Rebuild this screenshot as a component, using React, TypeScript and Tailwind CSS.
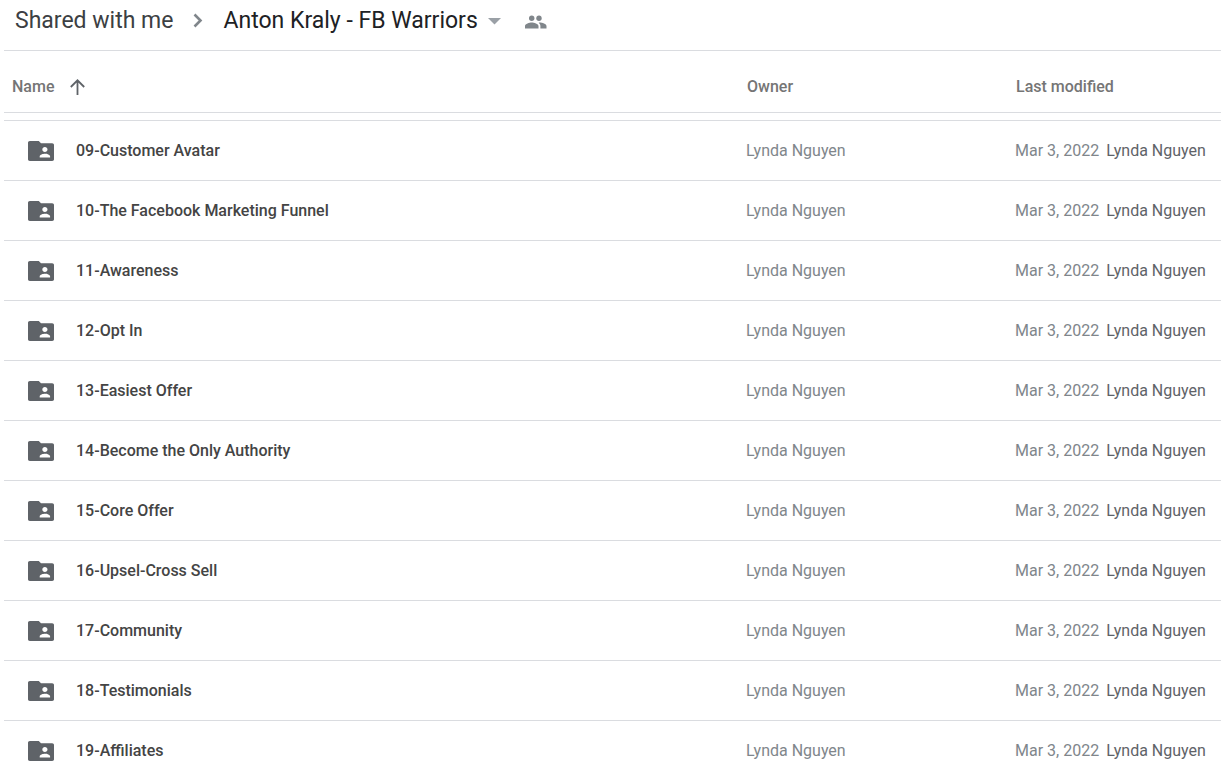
interface Folder {
  name: string;
  owner: string;
  modified: string;
  modifiedBy: string;
}

const FOLDER_NAMES = [
  '09-Customer Avatar',
  '10-The Facebook Marketing Funnel',
  '11-Awareness',
  '12-Opt In',
  '13-Easiest Offer',
  '14-Become the Only Authority',
  '15-Core Offer',
  '16-Upsel-Cross Sell',
  '17-Community',
  '18-Testimonials',
  '19-Affiliates',
];

const FOLDERS: Folder[] = FOLDER_NAMES.map((name) => ({
  name,
  owner: 'Lynda Nguyen',
  modified: 'Mar 3, 2022',
  modifiedBy: 'Lynda Nguyen',
}));

function SharedFolderIcon() {
  return (
    <svg width="26" height="20" viewBox="2 4 20 16" preserveAspectRatio="none" className="flex-shrink-0 fill-[#5f6368]" aria-hidden="true">
      <path d="M20.6 5.7H12L10.3 4H3.4C2.6 4 2 4.6 2 5.4v13.2c0 .8.6 1.4 1.4 1.4h17.2c.8 0 1.4-.6 1.4-1.4V7.1c0-.8-.6-1.4-1.4-1.4zM15 8.8c1.1 0 2 .9 2 2s-.9 2-2 2-2-.9-2-2 .9-2 2-2zm4 8.3h-8v-1c0-1.33 2.67-2 4-2s4 .67 4 2v1z" />
    </svg>
  );
}

function Breadcrumbs() {
  return (
    <nav className="flex h-[51px] items-center border-b border-[#dadce0] pb-2 pl-[11px] font-['Roboto',sans-serif] text-[23px] leading-8" aria-label="Breadcrumb">
      <a href="#shared" className="text-[#3c4043]">Shared with me</a>
      <svg width="10" height="16" viewBox="0 0 10 16" className="mx-5 fill-none stroke-[#80868b]" strokeWidth="2.6" aria-hidden="true">
        <path d="M1.5 1.500 7.500 7.500l-6 6" />
      </svg>
      <button type="button" className="flex items-center gap-[10px] text-[#202124]">
        Anton Kraly - FB Warriors
        <svg width="13" height="7" viewBox="0 0 13 7" className="fill-[#9aa0a6]" aria-hidden="true">
          <path d="M0 0h13L6.500 6.500z" />
        </svg>
      </button>
      <button type="button" className="ml-6 pt-0.5" aria-label="Manage people">
        <svg width="22" height="14" viewBox="0 0 22 14" className="fill-[#80868b]" aria-hidden="true">
          <circle cx="6.7" cy="3.2" r="2.7" />
          <circle cx="14" cy="3.2" r="2.7" />
          <path d="M6.7 7.500C4.500 7.500 0 8.700 0 11.100v2.500h13.500v-2.500c0-2.400-4.500-3.600-6.800-3.600zM14.600 7.600c-.3 0-.6 0-.9.100 1 .8 1.700 1.900 1.700 3.300v2.600h6.100v-2.500c0-2.300-4.300-3.500-6.900-3.500z" />
        </svg>
      </button>
    </nav>
  );
}

export default function App() {
  return (
    <main className="h-screen overflow-hidden bg-white pl-1 font-['Roboto',sans-serif] text-base">
      <Breadcrumbs />
      <table className="w-full table-fixed border-separate border-spacing-0 text-left">
        <colgroup>
          <col />
          <col className="w-[269px]" />
          <col className="w-[206px]" />
        </colgroup>
        <thead className="text-[#757575]">
          <tr className="h-[62px]">
            <th className="border-b border-[#dadce0] pt-[10px] pl-2 font-medium">
              <button type="button" className="flex items-center gap-4">
                Name
                <svg width="15" height="16" viewBox="0 0 15 16" className="fill-none stroke-[#5f6368]" strokeWidth="1.8" aria-hidden="true">
                  <path d="M7.500 16V1.500M.8 8l6.700-6.700L14.200 8" />
                </svg>
              </button>
            </th>
            <th className="border-b border-[#dadce0] pt-[10px] pl-px font-medium">Owner</th>
            <th className="border-b border-[#dadce0] pt-[10px] pl-px font-medium">Last modified</th>
          </tr>
        </thead>
        <tbody>
          {/* tail of the row scrolled under the header */}
          <tr className="h-2" aria-hidden="true">
            <td colSpan={3} className="border-b border-[#dadce0]" />
          </tr>
          {FOLDERS.map((folder) => (
            <tr key={folder.name} className="h-[60px] whitespace-nowrap">
              <td className="border-b border-[#dadce0] pl-6">
                <a href="#folder" className="flex items-center gap-[22px] font-medium text-[#444444]">
                  <SharedFolderIcon />
                  {folder.name}
                </a>
              </td>
              <td className="border-b border-[#dadce0] text-[#80868b]">{folder.owner}</td>
              <td className="border-b border-[#dadce0] text-[#80868b]">
                {folder.modified}
                <span className="ml-[7px] text-[#5f6368]">{folder.modifiedBy}</span>
              </td>
            </tr>
          ))}
        </tbody>
      </table>
    </main>
  );
}
